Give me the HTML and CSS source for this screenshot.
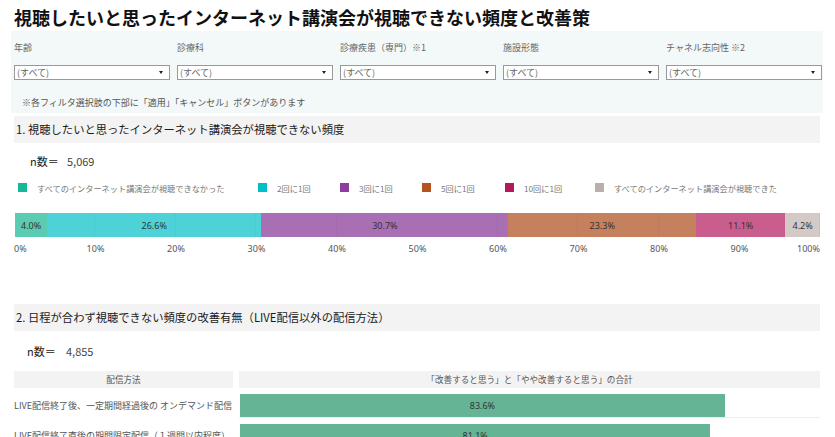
FILE: index.html
```html
<!DOCTYPE html>
<html lang="ja">
<head>
<meta charset="utf-8">
<link rel="stylesheet" href="styles.css">
</head>
<body>
<div class="page">
  <h1 class="title">視聴したいと思ったインターネット講演会が視聴できない頻度と改善策</h1>

  <div class="filters">
    <div class="filter">
      <div class="flabel">年齢</div>
      <div class="select"><span>(すべて)</span><i class="arrow"></i></div>
    </div>
    <div class="filter">
      <div class="flabel">診療科</div>
      <div class="select"><span>(すべて)</span><i class="arrow"></i></div>
    </div>
    <div class="filter">
      <div class="flabel">診療疾患（専門）※1</div>
      <div class="select"><span>(すべて)</span><i class="arrow"></i></div>
    </div>
    <div class="filter">
      <div class="flabel">施設形態</div>
      <div class="select"><span>(すべて)</span><i class="arrow"></i></div>
    </div>
    <div class="filter">
      <div class="flabel">チャネル志向性 ※2</div>
      <div class="select"><span>(すべて)</span><i class="arrow"></i></div>
    </div>
    <div class="note">※各フィルタ選択肢の下部に「適用」「キャンセル」ボタンがあります</div>
  </div>

  <div class="sec-head">1. 視聴したいと思ったインターネット講演会が視聴できない頻度</div>
  <div class="nline"><span class="nlab">n数＝</span><span class="nval">5,069</span></div>

  <div class="legend">
    <div class="litem"><i class="sw c1"></i>すべてのインターネット講演会が視聴できなかった</div>
    <div class="litem"><i class="sw c2"></i>2回に1回</div>
    <div class="litem"><i class="sw c3"></i>3回に1回</div>
    <div class="litem"><i class="sw c4"></i>5回に1回</div>
    <div class="litem"><i class="sw c5"></i>10回に1回</div>
    <div class="litem"><i class="sw c6"></i>すべてのインターネット講演会が視聴できた</div>
  </div>

  <div class="stack">
    <div class="seg s1" style="width:4.0%">4.0%</div>
    <div class="seg s2" style="width:26.6%">26.6%</div>
    <div class="seg s3" style="width:30.7%">30.7%</div>
    <div class="seg s4" style="width:23.3%">23.3%</div>
    <div class="seg s5" style="width:11.1%">11.1%</div>
    <div class="seg s6" style="width:4.3%">4.2%</div>
  </div>
  <div class="axis">
    <span class="first">0%</span>
    <span>10%</span>
    <span>20%</span>
    <span>30%</span>
    <span>40%</span>
    <span>50%</span>
    <span>60%</span>
    <span>70%</span>
    <span>80%</span>
    <span>90%</span>
    <span class="last">100%</span>
  </div>

  <div class="sec-head sec2">2. 日程が合わず視聴できない頻度の改善有無（LIVE配信以外の配信方法）</div>
  <div class="nline n2"><span class="nlab">n数＝</span><span class="nval">4,855</span></div>

  <div class="table">
    <div class="th">配信方法</div>
    <div class="th">「改善すると思う」と「やや改善すると思う」の合計</div>

    <div class="rlabel">LIVE配信終了後、一定期間経過後の オンデマンド配信</div>
    <div class="rcell"><div class="hbar" style="width:83.6%">83.6%</div></div>

    <div class="rlabel">LIVE配信終了直後の期間限定配信（１週間以内程度）</div>
    <div class="rcell"><div class="hbar" style="width:81.1%">81.1%</div></div>
  </div>
</div>
</body>
</html>
```

FILE: styles.css
```css
* { box-sizing: border-box; }
html, body { margin: 0; padding: 0; background: #fff; }
body {
  font-family: "Noto Sans CJK JP", "Noto Sans", "Liberation Sans", sans-serif;
  color: #333;
  width: 835px;
  height: 437px;
  overflow: hidden;
}
.page { padding: 0 15px 0 14px; }

.title {
  margin: 0;
  padding-top: 6px;
  height: 31px;
  font-size: 18px;
  line-height: 22px;
  font-weight: 700;
  color: #111;
}

.filters {
  margin-left: -3px;
  width: 812px;
  height: 82px;
  background: #f3f8f8;
  padding: 10px 0 0 3px;
  display: grid;
  grid-template-columns: repeat(5, 163px);
  grid-template-rows: auto auto;
}
.filter { display: flex; flex-direction: column; }
.flabel {
  font-size: 9px;
  line-height: 14px;
  color: #666;
  height: 14px;
}
.select {
  margin-top: 10px;
  width: 156px;
  height: 15px;
  border: 1px solid #999;
  background: #fff;
  display: flex;
  align-items: center;
  justify-content: space-between;
  padding: 0 6px 0 2px;
  font-size: 9px;
  color: #666;
  line-height: 13px;
}
.arrow {
  width: 0; height: 0;
  border-left: 2.5px solid transparent;
  border-right: 2.5px solid transparent;
  border-top: 3px solid #222;
}
.note {
  grid-column: 1 / -1;
  margin-top: 12px;
  padding-left: 8px;
  font-size: 9px;
  line-height: 14px;
  color: #555;
}

.sec-head {
  margin-top: 3px;
  width: 806px;
  height: 27px;
  background: #f3f3f3;
  padding-left: 2px;
  font-size: 11.3px;
  line-height: 27px;
  color: #1a1a1a;
}
.sec2 { margin-top: -1px; }

.nline {
  height: 36px;
  padding-left: 16px;
  display: flex;
  align-items: center;
  font-size: 11px;
  color: #222;
}
.nlab { width: 37px; }
.nval { color: #444; }
.n2 { height: 40px; padding-left: 13px; }
.n2 .nlab { width: 39px; }

.legend {
  display: grid;
  grid-template-columns: 240px 82px 82px 83px 90px auto;
  padding-left: 4px;
  height: 17px;
  align-items: center;
  font-size: 8.2px;
  color: #777;
}
.litem { display: flex; align-items: center; white-space: nowrap; }
.sw { width: 9px; height: 9px; margin-right: 10px; display: inline-block; }
.c1 { background: #16b997; }
.c2 { background: #00bfc9; }
.c3 { background: #8e3c9e; }
.c4 { background: #b5531e; }
.c5 { background: #b31a5d; }
.c6 { background: #b9b0ad; }

.stack {
  margin-top: 17px;
  margin-left: 1px;
  width: 805px;
  height: 24px;
  display: flex;
  position: relative;
}
.stack::after {
  content: "";
  position: absolute;
  inset: 0;
  background: repeating-linear-gradient(to right, transparent 0, transparent 79.5px, rgba(0,0,0,0.035) 79.5px, rgba(0,0,0,0.035) 80.5px);
  pointer-events: none;
}
.seg {
  height: 24px;
  display: flex;
  align-items: center;
  justify-content: center;
  font-size: 9px;
  color: #333;
  white-space: nowrap;
  font-family: "Noto Sans", "Liberation Sans", sans-serif;
}
.s1 { background: #5bcbb2; }
.s2 { background: #4dd3d7; }
.s3 { background: #a86fb4; }
.s4 { background: #c5805d; }
.s5 { background: #c95d8e; }
.s6 { background: #d3cac7; }

.axis {
  margin-left: 1px;
  width: 805px;
  display: grid;
  grid-template-columns: repeat(10, 1fr) 0;
  font-size: 9px;
  line-height: 14px;
  color: #555;
  padding-top: 5px;
  height: 68px;
  font-family: "Noto Sans", "Liberation Sans", sans-serif;
}
.axis span { justify-self: start; transform: translateX(-50%); white-space: nowrap; }
.axis span.first { transform: translateX(-1px); }
.axis span.last { justify-self: end; transform: none; }

.table {
  display: grid;
  grid-template-columns: 219px 581px;
  column-gap: 6px;
  font-size: 9px;
  color: #555;
}
.th {
  height: 17px;
  background: #f3f3f3;
  text-align: center;
  line-height: 17px;
  font-size: 8.6px;
  color: #555;
}
.rlabel {
  height: 30px;
  padding-top: 6px;
  line-height: 23px;
  white-space: nowrap;
  font-size: 9px;
  color: #555;
}
.rcell {
  height: 30px;
  padding-top: 6px;
  padding-left: 1px;
  border-bottom: 1px solid #eee;
}
.hbar {
  height: 23px;
  background: #64b495;
  display: flex;
  align-items: center;
  justify-content: center;
  color: #333;
  font-size: 9px;
  font-family: "Noto Sans", "Liberation Sans", sans-serif;
}
```
